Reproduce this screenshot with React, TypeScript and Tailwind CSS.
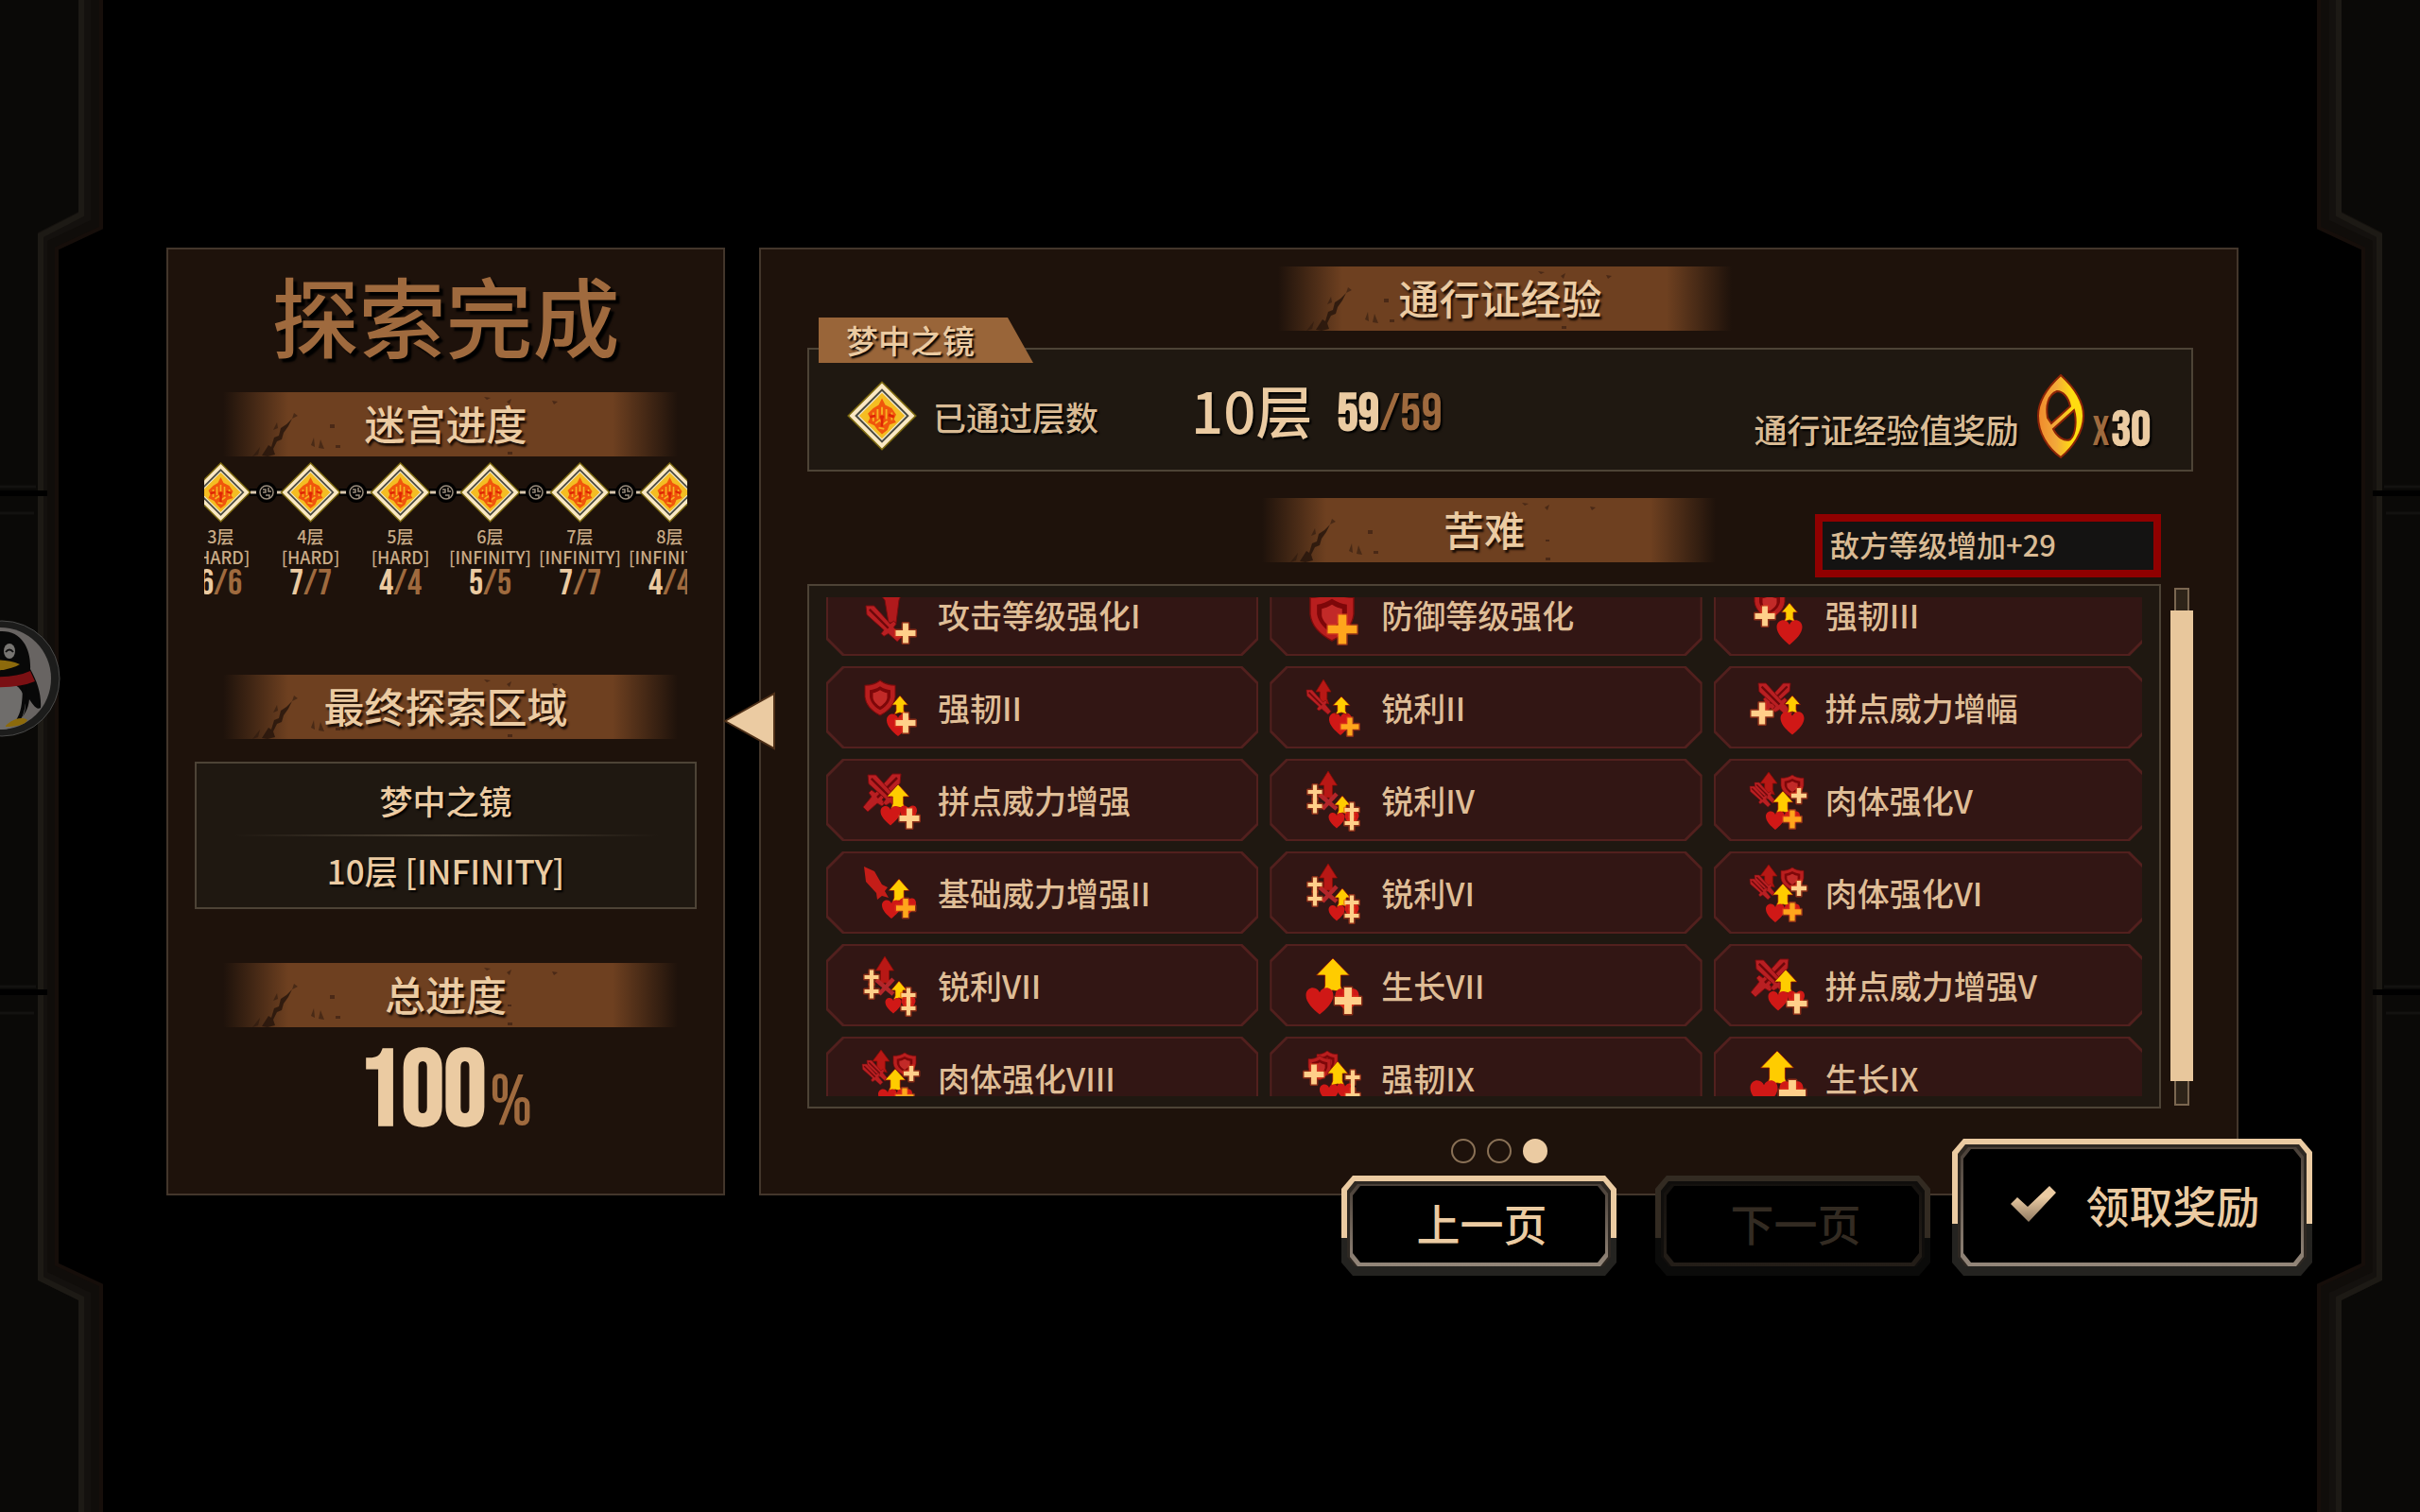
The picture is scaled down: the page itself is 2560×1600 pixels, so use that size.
import type { ReactNode } from "react";
import clsx from "clsx";

type Point = [number, number];

type Affliction = {
  name: string;
  icon: ReactNode;
};

type Floor = {
  floor: string;
  mode: string;
  cleared: number;
  total: number;
};

const CREAM = "#ffcf8a";
const ORANGE = "#ffa61c";

const floors: Floor[] = [
  { floor: "3层", mode: "[HARD]", cleared: 6, total: 6 },
  { floor: "4层", mode: "[HARD]", cleared: 7, total: 7 },
  { floor: "5层", mode: "[HARD]", cleared: 4, total: 4 },
  { floor: "6层", mode: "[INFINITY]", cleared: 5, total: 5 },
  { floor: "7层", mode: "[INFINITY]", cleared: 7, total: 7 },
  { floor: "8层", mode: "[INFINITY]", cleared: 4, total: 4 },
];

/* ---- icon parts, all drawn inside a 60x60 box ---- */

function Up({ at, w, h, fill = "#ffcc00" }: { at: Point; w: number; h: number; fill?: string }) {
  const [x, y] = at;
  const half = w / 2;
  const head = y + h * 0.5;
  const neck = w * 0.24;
  return (
    <path
      d={`M${x} ${y}L${x + half} ${head}H${x + neck}V${y + h * 0.8}L${x + neck + 2} ${y + h}L${x} ${y + h - 2}L${x - neck - 2} ${y + h}L${x - neck} ${y + h * 0.8}V${head}H${x - half}Z`}
      fill={fill}
      stroke="#8a0d06"
      strokeWidth="0.8"
    />
  );
}

function Heart({ at, s }: { at: Point; s: number }) {
  return (
    <g transform={`translate(${at[0]} ${at[1]}) scale(${s / 20})`}>
      <path d="M0 10C-5 6-10 1-10-4C-10-8-7-9.500-5-9.500C-2.500-9.500-.8-8 0-6C.8-8 2.500-9.500 5-9.500C7-9.500 10-8 10-4C10 1 5 6 0 10Z" fill="#d01816" />
    </g>
  );
}

function Plus({ at, s, fill = CREAM }: { at: Point; s: number; fill?: string }) {
  const [x, y] = at;
  const r = s / 2;
  const t = s * 0.14;
  const d = `M${x - t} ${y - r}H${x + t}V${y - t}H${x + r}V${y + t}H${x + t}V${y + r}H${x - t}V${y + t}H${x - r}V${y - t}H${x - t}Z`;
  return (
    <g>
      <path d={d} fill="none" stroke="#e2461c" strokeOpacity="0.5" strokeWidth="3" strokeLinejoin="round" />
      <path d={d} fill={fill} />
    </g>
  );
}

function DoublePlus({ at, gap }: { at: Point; gap: number }) {
  const [x, y] = at;
  return (
    <g>
      <Plus at={[x, y]} s={15} />
      <Plus at={[x, y + gap]} s={15} />
      <path d={`M${x} ${y}V${y + gap}`} stroke={CREAM} strokeWidth="4" />
    </g>
  );
}

function Shield({ at, w, h }: { at: Point; w: number; h: number }) {
  return (
    <g transform={`translate(${at[0]} ${at[1]}) scale(${w / 32} ${h / 36})`}>
      <path d="M16 0C21 4 26 5 32 5V17C31 26 24 32 16 36C8 32 1 26 0 17V5C6 5 11 4 16 0Z" fill="#b81e1e" stroke="#7c0c0c" />
      <path d="M16 6C20 8.500 23 9.500 27 10V17C26 23 21 28 16 30.500C11 28 6 23 5 17V10C9 9.500 12 8.500 16 6Z" fill="#7d0709" />
      <path d="M16 10C19 12 21 12.500 23.500 13V18C23 21.500 19.500 25 16 27C12.500 25 9 21.500 8.500 18V13C11 12.500 13 12 16 10Z" fill="#c22a28" />
    </g>
  );
}

/* blade points to the upper left, grip to the lower right */
function Sword({ at, s, flip = false }: { at: Point; s: number; flip?: boolean }) {
  return (
    <g transform={`translate(${at[0]} ${at[1]}) scale(${(flip ? -s : s) / 40} ${s / 40})`}>
      <path d="M0 0H9L27 20L31 17L34 20L31 24L40 35L35 40L25 31L20 34L17 31L20 27L1 10Z" fill="#b91f22" stroke="#7a0c0e" />
      <path d="M4 4L25 25" stroke="#6d080b" strokeWidth="2.500" />
    </g>
  );
}

function Sharpness() {
  return (
    <g>
      <Up at={[24, -1]} w={19} h={30} fill="#b81815" />
      <path d="M15 24L33 39M33 23L18 39" stroke="#b3262a" strokeWidth="4.500" />
      <DoublePlus at={[10, 21]} gap={15} />
      <Up at={[39, 25]} w={17} h={20} />
      <Heart at={[33, 51]} s={17} />
      <Heart at={[49, 49]} s={15} />
      <DoublePlus at={[49, 40]} gap={14} />
    </g>
  );
}

function Body() {
  return (
    <g>
      <Up at={[20, 0]} w={18} h={24} fill="#b81815" />
      <Sword at={[5, 11]} s={22} />
      <Sword at={[0, 15]} s={22} />
      <Shield at={[33, 3]} w={24} h={24} />
      <Plus at={[52, 25]} s={16} />
      <Up at={[35, 20]} w={22} h={24} />
      <Heart at={[27, 51]} s={20} />
      <Heart at={[45, 49]} s={16} />
      <Plus at={[45, 50]} s={19} fill={ORANGE} />
    </g>
  );
}

function Growth() {
  return (
    <g>
      <Up at={[29, 1]} w={35} h={36} />
      <Heart at={[15, 46]} s={29} />
      <Heart at={[44, 45]} s={25} />
      <Plus at={[45, 46]} s={28} />
    </g>
  );
}

function ClashPower() {
  return (
    <g>
      <Sword at={[41, 2]} s={40} flip />
      <Sword at={[6, 3]} s={38} />
      <Up at={[38, 13]} w={24} h={26} />
      <Heart at={[30, 46]} s={21} />
      <Heart at={[49, 44]} s={18} />
      <Plus at={[50, 49]} s={21} />
    </g>
  );
}

const afflictions: Affliction[] = [
  {
    name: "攻击等级强化I",
    icon: (
      <g>
        <path d="M14 2H44L39 14L36 38H28L24 14Z" fill="#b01a1c" stroke="#7a0c0e" />
        <Sword at={[4, 20]} s={38} />
        <Plus at={[46, 49]} s={21} />
      </g>
    ),
  },
  {
    name: "防御等级强化",
    icon: (
      <g>
        <Shield at={[5, 4]} w={46} h={53} />
        <Plus at={[39, 45]} s={31} fill={ORANGE} />
      </g>
    ),
  },
  {
    name: "强韧III",
    icon: (
      <g>
        <Shield at={[5, 0]} w={32} h={34} />
        <Plus at={[16, 31]} s={21} />
        <Up at={[42, 17]} w={17} h={20} />
        <Heart at={[42, 48]} s={27} />
      </g>
    ),
  },
  {
    name: "强韧II",
    icon: (
      <g>
        <Shield at={[3, 1]} w={32} h={37} />
        <Heart at={[38, 48]} s={24} />
        <Up at={[40, 17]} w={17} h={20} />
        <Plus at={[46, 46]} s={21} />
      </g>
    ),
  },
  {
    name: "锐利II",
    icon: (
      <g>
        <Up at={[19, 0]} w={16} h={26} fill="#b81815" />
        <Sword at={[1, 11]} s={26} />
        <Heart at={[37, 47]} s={24} />
        <Up at={[38, 18]} w={18} h={19} />
        <Plus at={[47, 50]} s={19} fill={ORANGE} />
      </g>
    ),
  },
  {
    name: "拼点威力增幅",
    icon: (
      <g>
        <Sword at={[43, 4]} s={34} flip />
        <Sword at={[9, 4]} s={36} />
        <Plus at={[13, 36]} s={23} />
        <Up at={[45, 17]} w={17} h={19} />
        <Heart at={[45, 46]} s={25} />
      </g>
    ),
  },
  { name: "拼点威力增强", icon: <ClashPower /> },
  { name: "锐利IV", icon: <Sharpness /> },
  { name: "肉体强化V", icon: <Body /> },
  {
    name: "基础威力增强II",
    icon: (
      <g>
        <path d="M2 2L13 7L21 21L27 24L24 28L28 35L21 33L16 37L15 30L4 18Z" fill="#c41d18" />
        <Up at={[39, 15]} w={22} h={25} />
        <Heart at={[31, 47]} s={20} />
        <Heart at={[48, 44]} s={18} />
        <Plus at={[46, 46]} s={20} fill={ORANGE} />
      </g>
    ),
  },
  { name: "锐利VI", icon: <Sharpness /> },
  { name: "肉体强化VI", icon: <Body /> },
  { name: "锐利VII", icon: <Sharpness /> },
  { name: "生长VII", icon: <Growth /> },
  { name: "拼点威力增强V", icon: <ClashPower /> },
  { name: "肉体强化VIII", icon: <Body /> },
  {
    name: "强韧IX",
    icon: (
      <g>
        <Shield at={[12, 1]} w={22} h={26} />
        <Shield at={[3, 6]} w={24} h={26} />
        <Plus at={[9, 26]} s={21} />
        <Up at={[34, 12]} w={22} h={26} />
        <Heart at={[25, 46]} s={20} />
        <Heart at={[42, 44]} s={18} />
        <DoublePlus at={[50, 29]} gap={19} />
      </g>
    ),
  },
  { name: "生长IX", icon: <Growth /> },
];

function Emblem() {
  return (
    <g>
      <path d="M0-32L32 0L0 32L-32 0Z" fill="#7d6a10" />
      <path d="M0-30L30 0L0 30L-30 0Z" fill="#fbe9c4" />
      <path d="M0-25L25 0L0 25L-25 0Z" fill="#4a4a40" />
      <path d="M0-22.500L22.500 0L0 22.500L-22.500 0Z" fill="#f3ead0" />
      <path d="M0-21L21 0L0 21L-21 0Z" fill="#f4bd22" />
      <path
        d="M0-16L3-10L9-7L13-1L11 3L13 6L7 8L5 13L0 17L-4 13L-7 9L-13 6L-11 2L-13-2L-8-7L-3-10Z"
        fill="#f0560c"
      />
      <path
        d="M-8-3V5M-4-6V3M0-8V-1M4-6V3M9-3V4M-6 7L-2 4L1 8L5 5M-3 11L2 12"
        fill="none"
        stroke="#f7b422"
        strokeWidth="1.600"
      />
      <path d="M-11 1L-6 0M6-1L11 1M-2 1H2M0 2V10" fill="none" stroke="#df2605" strokeWidth="2.400" />
    </g>
  );
}

function Banner({ children }: { children: ReactNode }) {
  return (
    <h2 className="relative flex h-[68px] w-[490px] items-center justify-center pb-[3px] text-[43px] leading-none text-[#ebcba2] [text-shadow:2px_3px_2px_#1a0d06]">
      <span className="absolute inset-y-0 left-[2%] w-[14%] bg-linear-to-r from-transparent to-[#6e4020]" />
      <span className="absolute inset-y-0 left-[16%] right-[14%] bg-[#6e4020]" />
      <span className="absolute inset-y-0 right-0 w-[14%] bg-linear-to-r from-[#6e4020] to-transparent" />
      <svg viewBox="0 0 490 68" className="absolute inset-0 h-full w-full" aria-hidden="true">
        <path d="M50 67L57 56L60 58L63 48L68 46L70 38L76 34L82 28L78 36L73 43L71 50L66 52L62 60L64 66L56 68Z" fill="#24140b" opacity=".8" />
        <path d="M40 68L48 58L46 66ZM66 32L62 40L67 38ZM84 22L88 25L82 28ZM102 56L105 48L106 58ZM112 50L116 60L110 59Z" fill="#24140b" opacity=".5" />
        <path d="M122 34h5v4h-5zM128 56h5v3h-5zM285 5l7 1-4 2zM309 10l5-3-2 6zM357 9l6 1-4 3zM310 63h5v3h-5zM310 44h4v2h-4z" fill="#3a2012" opacity=".7" />
      </svg>
      <span className="relative">{children}</span>
    </h2>
  );
}

const frameShape =
  "[clip-path:polygon(12px_0,calc(100%-12px)_0,100%_14px,100%_calc(100%-14px),calc(100%-12px)_100%,12px_100%,0_calc(100%-14px),0_14px)]";
const coreShape =
  "[clip-path:polygon(8px_0,calc(100%-8px)_0,100%_10px,100%_calc(100%-10px),calc(100%-8px)_100%,8px_100%,0_calc(100%-10px),0_10px)]";
const cellShape =
  "[clip-path:polygon(17px_0,calc(100%-17px)_0,100%_17px,100%_calc(100%-17px),calc(100%-17px)_100%,17px_100%,0_calc(100%-17px),0_17px)]";

function FrameButton({ children, className, disabled }: { children: ReactNode; className: string; disabled?: boolean }) {
  return (
    <button
      type="button"
      disabled={disabled}
      className={clsx(
        "flex px-[6px] pt-[6px] pb-[10px] text-[46px] leading-none font-medium",
        frameShape,
        className,
        disabled
          ? "bg-linear-to-b from-[#332b22] from-62% to-[#0b0b0a] to-62% text-[#332b22]"
          : "bg-linear-to-b from-[#ebcba2] from-62% to-[#242320] to-62% text-[#ebcba2]"
      )}
    >
      <span className={clsx("flex flex-1 self-stretch px-[3px] pt-[3px]", coreShape, disabled ? "bg-[#100e0c]" : "bg-[#2e2822]")}>
        <span
          className={clsx(
            "flex flex-1 px-[3px] pt-[2px] pb-[4px]",
            coreShape,
            disabled ? "bg-linear-to-b from-[#14110e] to-[#241e18]" : "bg-linear-to-b from-[#4a4038] to-[#94877a]"
          )}
        >
          <span className={clsx("flex flex-1 items-center justify-center gap-8 bg-black pb-[5px] pl-[6px]", coreShape)}>{children}</span>
        </span>
      </span>
    </button>
  );
}

function FloorTrack() {
  return (
    <div className="mx-[38px] mt-[6px] overflow-hidden">
      <ol className="-ml-[30px] flex">
        {floors.map((f, i) => (
          <li key={f.floor} className="flex w-[95px] shrink-0 flex-col items-center whitespace-nowrap text-[18px] leading-[22px] text-[#c9ab86]">
            <svg viewBox="0 0 95 64" className="h-16 w-full overflow-visible" aria-hidden="true">
              {i < floors.length - 1 && (
                <g>
                  <path d="M78 32H112" stroke="#000" strokeWidth="8" />
                  <path d="M79 32H86M105 32H112" stroke="#d8c6ae" strokeWidth="3" />
                  <circle cx="96" cy="32" r="11" fill="#000" />
                  <circle cx="96" cy="32" r="7" fill="none" stroke="#9a8c7c" strokeWidth="1.500" />
                  <path d="M92 29H95V32H92M98 27V31H101M95 35H99V38" fill="none" stroke="#9a8c7c" strokeWidth="1.500" />
                </g>
              )}
              <g transform="translate(47.500 32)">
                <Emblem />
              </g>
            </svg>
            <span className="mt-[3px]">{f.floor}</span>
            <span>{f.mode}</span>
            <span className="font-['Bebas_Neue','Roboto_Condensed',sans-serif] text-[38px] leading-[36px] text-[#ebcba2]">
              {f.cleared}
              <span className="text-[#9f6a3e]">/{f.total}</span>
            </span>
          </li>
        ))}
      </ol>
    </div>
  );
}

function Backdrop() {
  const frame = (
    <g>
      <path d="M0 0H109V242L60 265V1337L109 1360V1600H0Z" fill="#100d0a" />
      <path d="M0 0H96V233L50 255V1346L96 1368V1600H0Z" fill="#14110e" />
      <path d="M0 0H83V224L40 246V1355L83 1376V1600H0Z" fill="#0a0907" />
      <path d="M86 0V227L43 249V1353L86 1374V1600" fill="none" stroke="#1d1a15" strokeWidth="6" />
      <path d="M107 0V241L60 263V1338L107 1360V1600" fill="none" stroke="#160e0a" strokeWidth="4" />
      <path d="M0 522H50M0 1050H50" stroke="#000" strokeWidth="6" />
      <path d="M0 515H38M0 543H36M0 1044H38M0 1072H36" stroke="#131210" strokeWidth="3" />
    </g>
  );
  return (
    <div className="pointer-events-none absolute inset-0 flex justify-between" aria-hidden="true">
      <svg viewBox="0 0 110 1600" preserveAspectRatio="none" className="h-full w-[110px]">
        {frame}
      </svg>
      <svg viewBox="0 0 110 1600" preserveAspectRatio="none" className="h-full w-[110px] -scale-x-100">
        {frame}
      </svg>
    </div>
  );
}

function ChatBubble() {
  return (
    <button type="button" aria-label="QQ" className="absolute top-[656px] -left-[60px] h-[124px] w-[124px]">
      <svg viewBox="0 0 124 124" className="h-full w-full">
        <circle cx="62" cy="62" r="61" fill="#1c1c1b" stroke="#4a4a49" />
        <circle cx="60" cy="62" r="54" fill="#686462" />
        <path d="M62 12C84 12 93 32 92 52C100 66 104 80 103 93C98 96 94 88 91 84C90 96 84 104 76 110H44L30 60C30 30 40 12 62 12Z" fill="#080808" />
        <ellipse cx="62" cy="90" rx="25" ry="26" fill="#6f6d6b" />
        <path d="M86 66C86 90 84 100 78 108" fill="none" stroke="#080808" strokeWidth="4" />
        <ellipse cx="70" cy="33" rx="6" ry="8" fill="#777572" />
        <path d="M66 34Q70 29 74 34" fill="none" stroke="#111" strokeWidth="2" />
        <path d="M44 44Q64 40 81 47Q70 54 44 54Z" fill="#8c6a0c" />
        <path d="M34 58Q70 64 92 54L97 65Q76 74 34 70Z" fill="#7a1013" />
        <path d="M66 112C74 104 84 102 89 106C86 112 74 113 66 113Z" fill="#8c6a0c" />
      </svg>
    </button>
  );
}

function SummaryPanel() {
  return (
    <aside className="w-[591px] shrink-0 border-2 border-[#43362b] bg-[#1e120b] pb-[45px]">
      <h1 className="mt-[18px] text-center text-[92px] leading-[100px] font-medium text-[#9f6a3e] [text-shadow:4px_4px_2px_#000]">
        探索完成
      </h1>
      <div className="mt-[33px] flex justify-center">
        <Banner>迷宫进度</Banner>
      </div>
      <FloorTrack />
      <div className="mt-[78px] flex justify-center">
        <Banner>最终探索区域</Banner>
      </div>
      <div className="mx-[28px] mt-[24px] flex h-[156px] flex-col items-center border-2 border-[#4d4336] bg-[#1f1811] text-[35px] leading-[38px] text-[#ebcba2] [text-shadow:2px_2px_2px_#000]">
        <p className="mt-[20px]">梦中之镜</p>
        <hr className="my-[17px] h-[2px] w-[450px] border-0 bg-linear-to-r from-transparent via-[#4d4336] to-transparent" />
        <p>10层 [INFINITY]</p>
      </div>
      <div className="mt-[57px] flex justify-center">
        <Banner>总进度</Banner>
      </div>
      <p className="mt-[20px] flex items-baseline justify-center gap-1 font-['Bebas_Neue','Roboto_Condensed',sans-serif] text-[112px] leading-[100px] font-bold text-[#ebcba2]">
        100<span className="text-[76px] font-normal text-[#9f6a3e]">%</span>
      </p>
    </aside>
  );
}

function PassPanel() {
  return (
    <section className="relative flex-1 border-2 border-[#43362b] bg-[#1e120b] pt-[18px] pr-[46px] pb-[32px] pl-[49px]">
      <button type="button" aria-label="收起" className="absolute top-[466px] -left-[40px] h-[66px] w-[58px]">
        <svg viewBox="0 0 58 66" className="h-full w-full">
          <path d="M2 33L54 4V62Z" fill="#ebcba2" stroke="#4d2f18" strokeWidth="2" />
        </svg>
      </button>

      <div className="flex justify-center">
        <Banner>通行证经验</Banner>
      </div>

      <div className="relative mt-[18px] flex h-[131px] items-center border-2 border-[#4d4336] bg-[#1f1811] pr-[43px] pl-[39px] text-[35px] leading-none text-[#d9bb94] [text-shadow:2px_2px_2px_#000]">
        <h3 className="absolute -top-[34px] left-[10px] flex h-[48px] w-[227px] items-center bg-[#996539] pl-[29px] text-[34px] text-[#ebcba2] [clip-path:polygon(0_0,200px_0,100%_100%,0_100%)]">
          梦中之镜
        </h3>
        <svg viewBox="-33 -33 66 66" className="mt-[12px] h-[76px] w-[76px]" aria-hidden="true">
          <Emblem />
        </svg>
        <span className="mt-[14px] ml-[16px]">已通过层数</span>
        <span className="mb-[2px] ml-[98px] text-[60px] text-[#ebcba2]">10层</span>
        <span className="mt-[10px] ml-[26px] font-['Bebas_Neue','Roboto_Condensed',sans-serif] text-[56px] text-[#ebcba2]">
          <b>59</b>
          <span className="text-[#9f6a3e]">/59</span>
        </span>
        <span className="mt-[40px] ml-auto">通行证经验值奖励</span>
        <svg viewBox="0 0 56 92" className="mt-[12px] ml-[16px] h-[92px] w-[56px]" aria-hidden="true">
          <defs>
            <linearGradient id="coin" x1="0" x2="1">
              <stop offset="0" stopColor="#f08a2c" />
              <stop offset=".4" stopColor="#f2a93a" />
              <stop offset=".75" stopColor="#ffdc10" />
            </linearGradient>
          </defs>
          <path
            fillRule="evenodd"
            d="M28 3C40 14 52 28 52 46C52 64 40 80 28 90C14 80 4 64 4 46C4 28 16 14 28 3ZM24 20C14 24 12 36 14 48L18 54L38 36C36 26 30 20 24 20ZM42 40L20 60C24 68 32 74 38 71C44 66 45 50 42 40Z"
            fill="url(#coin)"
            stroke="#8c2407"
            strokeWidth="2"
          />
        </svg>
        <span className="mt-[44px] ml-[6px] flex items-baseline gap-[2px] font-['Bebas_Neue','Roboto_Condensed',sans-serif] text-[52px] text-[#ebcba2]">
          <span className="text-[44px] text-[#9f6a3e]">x</span>
          <b>30</b>
        </span>
      </div>

      <div className="mt-[28px] mr-[34px] grid h-[84px] grid-cols-[1fr_490px_1fr]">
        <div className="col-start-2">
          <Banner>苦难</Banner>
        </div>
        <p className="flex h-[67px] w-[366px] items-center self-end justify-self-end border-8 border-[#900000] bg-[#141312] pb-[5px] pl-[8px] text-[31px] leading-none text-[#d9bb94]">
          敌方等级增加+29
        </p>
      </div>

      <div className="mt-[7px] flex items-center gap-[10px]">
        <div className="flex-1 border-2 border-[#4d4336] bg-[#1f1811] px-[18px] pt-[12px] pb-[11px]">
          <div className="h-[528px] overflow-hidden">
            <ul className="-mt-[25px] grid w-[calc(100%+4px)] grid-cols-3 gap-x-3 gap-y-[11px]">
              {afflictions.map((a) => (
                <li key={a.name} className={clsx("h-[87px] bg-[#52201e] p-[2px]", cellShape)}>
                  <div className={clsx("flex h-full items-center gap-[20px] bg-[#321614] pl-[36px] text-[34px] leading-none text-[#dfbd96]", cellShape)}>
                    <svg viewBox="0 0 60 60" className="h-[60px] w-[60px] overflow-visible" aria-hidden="true">
                      {a.icon}
                    </svg>
                    {a.name}
                  </div>
                </li>
              ))}
            </ul>
          </div>
        </div>
        <div className="flex h-[548px] w-[24px] flex-col items-center">
          <span className="h-[24px] w-[16px] border-2 border-b-0 border-[#7a6650] bg-[#2e2419]" />
          <span className="w-full flex-1 bg-[#e8c79c]" />
          <span className="h-[26px] w-[16px] border-2 border-t-0 border-[#7a6650] bg-[#2e2419]" />
        </div>
      </div>

      <nav className="mt-[32px] flex justify-center gap-[12px] pr-[3px]" aria-label="页码">
        <button type="button" aria-label="1" className="h-[26px] w-[26px] rounded-full border-2 border-[#8a7156]" />
        <button type="button" aria-label="2" className="h-[26px] w-[26px] rounded-full border-2 border-[#8a7156]" />
        <button type="button" aria-label="3" aria-current="page" className="h-[26px] w-[26px] rounded-full bg-[#ebcba2]" />
      </nav>
    </section>
  );
}

export default function App() {
  return (
    <div className="relative min-h-screen overflow-hidden bg-black font-['Noto_Sans_CJK_SC',sans-serif] font-medium">
      <Backdrop />
      <ChatBubble />
      <main className="relative pt-[262px] pr-[192px] pl-[176px]">
        <div className="flex gap-[36px]">
          <SummaryPanel />
          <PassPanel />
        </div>
        <div className="relative -mt-[60px] -mr-[78px] flex items-end justify-end">
          <FrameButton className="mr-[41px] h-[106px] w-[291px]">上一页</FrameButton>
          <FrameButton className="mr-[23px] h-[106px] w-[291px]" disabled>
            下一页
          </FrameButton>
          <FrameButton className="h-[145px] w-[381px]">
            <svg viewBox="0 0 48 38" className="h-[38px] w-[48px]" aria-hidden="true">
              <defs>
                <linearGradient id="tick" x1="0" x2="0" y1="0" y2="1">
                  <stop offset=".3" stopColor="#ebcba2" />
                  <stop offset="1" stopColor="#8f7a62" />
                </linearGradient>
              </defs>
              <path d="M0 19L7 12L18 22L41 0L48 7L19 38Z" fill="url(#tick)" />
            </svg>
            领取奖励
          </FrameButton>
        </div>
      </main>
    </div>
  );
}
